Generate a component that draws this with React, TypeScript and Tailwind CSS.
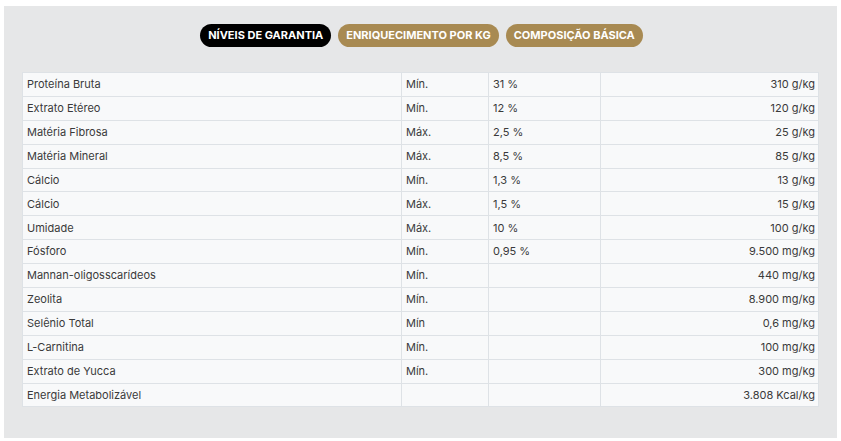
const rows = [
  { name: "Proteína Bruta", kind: "Mín.", pct: "31 %", value: "310 g/kg" },
  { name: "Extrato Etéreo", kind: "Mín.", pct: "12 %", value: "120 g/kg" },
  { name: "Matéria Fibrosa", kind: "Máx.", pct: "2,5 %", value: "25 g/kg" },
  { name: "Matéria Mineral", kind: "Máx.", pct: "8,5 %", value: "85 g/kg" },
  { name: "Cálcio", kind: "Mín.", pct: "1,3 %", value: "13 g/kg" },
  { name: "Cálcio", kind: "Máx.", pct: "1,5 %", value: "15 g/kg" },
  { name: "Umidade", kind: "Máx.", pct: "10 %", value: "100 g/kg" },
  { name: "Fósforo", kind: "Mín.", pct: "0,95 %", value: "9.500 mg/kg" },
  { name: "Mannan-oligosscarídeos", kind: "Mín.", pct: "", value: "440 mg/kg" },
  { name: "Zeolita", kind: "Mín.", pct: "", value: "8.900 mg/kg" },
  { name: "Selênio Total", kind: "Mín", pct: "", value: "0,6 mg/kg" },
  { name: "L-Carnitina", kind: "Mín.", pct: "", value: "100 mg/kg" },
  { name: "Extrato de Yucca", kind: "Mín.", pct: "", value: "300 mg/kg" },
  { name: "Energia Metabolizável", kind: "", pct: "", value: "3.808 Kcal/kg" },
];

const tabs = [
  { label: "Níveis de Garantia", active: true },
  { label: "Enriquecimento por kg", active: false },
  { label: "Composição Básica", active: false },
];

export default function App() {
  return (
    <div className="w-[841px] h-[441px] bg-white pt-[6px] px-[4px] font-['Inter',sans-serif]">
      <div className="w-[833px] h-[432px] bg-[#e6e7e8] pt-[18px] px-[18px]">
        {/* tabs */}
        <div className="flex justify-center gap-[7px] pl-[2px]">
          {tabs.map((t) => (
            <button
              key={t.label}
              className={`h-[23px] rounded-full px-[8px] text-[11px] font-bold uppercase text-white leading-none ${
                t.active ? "bg-black" : "bg-[#a88a52]"
              }`}
            >
              {t.label}
            </button>
          ))}
        </div>

        <table className="mt-[25px] w-[797px] border-collapse bg-[#f8f9fa] text-[11px] text-[#3a3a3a]">
          <colgroup>
            <col className="w-[379px]" />
            <col className="w-[87px]" />
            <col className="w-[112px]" />
            <col />
          </colgroup>
          <tbody>
            {rows.map((r, i) => (
              <tr key={i} className="h-[23.9px]">
                <td className="border border-[#dee2e6] px-[4px] py-0">{r.name}</td>
                <td className="border border-[#dee2e6] px-[4px] py-0">{r.kind}</td>
                <td className="border border-[#dee2e6] px-[4px] py-0">{r.pct}</td>
                <td className="border border-[#dee2e6] px-[3px] py-0 text-right">{r.value}</td>
              </tr>
            ))}
          </tbody>
        </table>
      </div>
    </div>
  );
}
